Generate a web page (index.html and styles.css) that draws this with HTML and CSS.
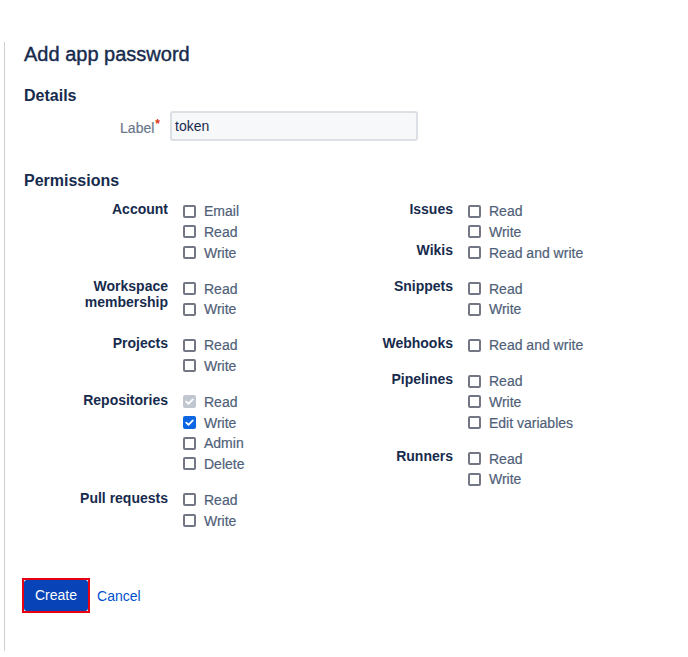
FILE: index.html
```html
<!DOCTYPE html>
<html lang="en">
<head>
<meta charset="utf-8">
<title>Add app password</title>
<link rel="stylesheet" href="styles.css">
</head>
<body>
<div class="page">
  <h1 class="title">Add app password</h1>
  <h2 class="section details-h">Details</h2>
  <div class="field">
    <label class="field-label" for="lbl">Label<span class="req">*</span></label>
    <input id="lbl" class="text" type="text" value="token">
  </div>
  <h2 class="section perm-h">Permissions</h2>
  <div class="perms">
    <div class="col">
      <div class="group">
        <div class="glabel">Account</div>
        <ul class="opts">
          <li><span class="cb"></span>Email</li>
          <li><span class="cb"></span>Read</li>
          <li><span class="cb"></span>Write</li>
        </ul>
      </div>
      <div class="group">
        <div class="glabel">Workspace membership</div>
        <ul class="opts">
          <li><span class="cb"></span>Read</li>
          <li><span class="cb"></span>Write</li>
        </ul>
      </div>
      <div class="group">
        <div class="glabel">Projects</div>
        <ul class="opts">
          <li><span class="cb"></span>Read</li>
          <li><span class="cb"></span>Write</li>
        </ul>
      </div>
      <div class="group">
        <div class="glabel">Repositories</div>
        <ul class="opts">
          <li><span class="cb disabled"><svg viewBox="0 0 13 13" width="13" height="13"><path d="M3.3 6.7 L5.5 8.9 L9.8 4.4" fill="none" stroke="#fff" stroke-width="1.8" stroke-linecap="round" stroke-linejoin="round"/></svg></span>Read</li>
          <li><span class="cb checked"><svg viewBox="0 0 13 13" width="13" height="13"><path d="M3.3 6.7 L5.5 8.9 L9.8 4.4" fill="none" stroke="#fff" stroke-width="1.8" stroke-linecap="round" stroke-linejoin="round"/></svg></span>Write</li>
          <li><span class="cb"></span>Admin</li>
          <li><span class="cb"></span>Delete</li>
        </ul>
      </div>
      <div class="group">
        <div class="glabel">Pull requests</div>
        <ul class="opts">
          <li><span class="cb"></span>Read</li>
          <li><span class="cb"></span>Write</li>
        </ul>
      </div>
    </div>
    <div class="col">
      <div class="group tight">
        <div class="glabel">Issues</div>
        <ul class="opts">
          <li><span class="cb"></span>Read</li>
          <li><span class="cb"></span>Write</li>
        </ul>
      </div>
      <div class="group">
        <div class="glabel">Wikis</div>
        <ul class="opts">
          <li><span class="cb"></span>Read and write</li>
        </ul>
      </div>
      <div class="group">
        <div class="glabel">Snippets</div>
        <ul class="opts">
          <li><span class="cb"></span>Read</li>
          <li><span class="cb"></span>Write</li>
        </ul>
      </div>
      <div class="group">
        <div class="glabel">Webhooks</div>
        <ul class="opts">
          <li><span class="cb"></span>Read and write</li>
        </ul>
      </div>
      <div class="group">
        <div class="glabel">Pipelines</div>
        <ul class="opts">
          <li><span class="cb"></span>Read</li>
          <li><span class="cb"></span>Write</li>
          <li><span class="cb"></span>Edit variables</li>
        </ul>
      </div>
      <div class="group">
        <div class="glabel">Runners</div>
        <ul class="opts">
          <li><span class="cb"></span>Read</li>
          <li><span class="cb"></span>Write</li>
        </ul>
      </div>
    </div>
  </div>
  <div class="actions">
    <span class="focus-ring"><button class="btn-primary" type="button">Create</button></span>
    <a class="cancel" href="#">Cancel</a>
  </div>
</div>
</body>
</html>
```
FILE: styles.css
```css
* { box-sizing: border-box; }
html, body { margin: 0; background: #fff; }
body {
  font-family: "Liberation Sans", Arial, sans-serif;
  font-size: 14px;
  color: #172B4D;
}
.page {
  margin: 42px 0 0 4px;
  border-left: 1px solid #cfcfcf;
  padding: 0 0 38px 19px;
}
.title {
  margin: 0;
  font-size: 20px;
  line-height: 24px;
  font-weight: 500;
  color: #172B4D;
  -webkit-text-stroke: 0.4px #172B4D;
}
.section {
  margin: 0;
  font-size: 16px;
  line-height: 20px;
  font-weight: 700;
  color: #172B4D;
}
.details-h { margin-top: 20px; }
.perm-h { margin-top: 30px; }
.field {
  display: flex;
  align-items: center;
  margin-top: 5px;
}
.field-label {
  width: 136px;
  margin-right: 10px;
  text-align: right;
  color: #6B778C;
  font-size: 14px;
  line-height: 20px;
  -webkit-text-stroke: 0.2px #6B778C;
}
.req {
  color: #DE350B;
  font-size: 12px;
  font-weight: 700;
  vertical-align: 5px;
  margin-left: 1px;
  -webkit-text-stroke: 0;
}
.text {
  width: 248px;
  height: 30px;
  border: 2px solid #DCDFE4;
  border-radius: 3px;
  background: #F7F8FA;
  padding: 0 3px;
  font-family: inherit;
  font-size: 14px;
  color: #172B4D;
  outline: none;
}
.perms {
  display: grid;
  grid-template-columns: 285px 285px;
  margin-top: 10px;
}
.group {
  display: flex;
  align-items: flex-start;
  margin-bottom: 15.333px;
}
.group.tight { margin-bottom: 0; }
.glabel {
  width: 144px;
  flex: none;
  text-align: right;
  font-weight: 700;
  font-size: 14px;
  line-height: 16px;
  color: #172B4D;
}
.opts {
  list-style: none;
  margin: 0;
  padding: 0;
}
.opts li {
  display: flex;
  align-items: center;
  height: 20.667px;
  color: #505F79;
  font-size: 14px;
  white-space: nowrap;
  -webkit-text-stroke: 0.2px #505F79;
}
.cb {
  width: 13px;
  height: 13px;
  flex: none;
  margin: 0 8px 0 15px;
  border: 2px solid #737684;
  border-radius: 2px;
  background: #fff;
  display: flex;
  align-items: center;
  justify-content: center;
}
.cb svg { display: block; flex: none; }
.cb.checked { background: #0C66E4; border-color: #0C66E4; }
.cb.disabled { background: #C1C7D0; border-color: #C1C7D0; }
.actions {
  display: flex;
  align-items: center;
  margin-top: 32px;
}
.focus-ring {
  display: inline-flex;
  margin-left: -2px;
  border: 2px solid #E60012;
}
.btn-primary {
  height: 31px;
  padding: 0 11px;
  border: 0;
  border-radius: 3px;
  background: #0843B8;
  color: #fff;
  font-family: inherit;
  font-size: 14px;
  line-height: 31px;
}
.cancel {
  margin-left: 7px;
  color: #0052CC;
  text-decoration: none;
  font-size: 14px;
}
```
